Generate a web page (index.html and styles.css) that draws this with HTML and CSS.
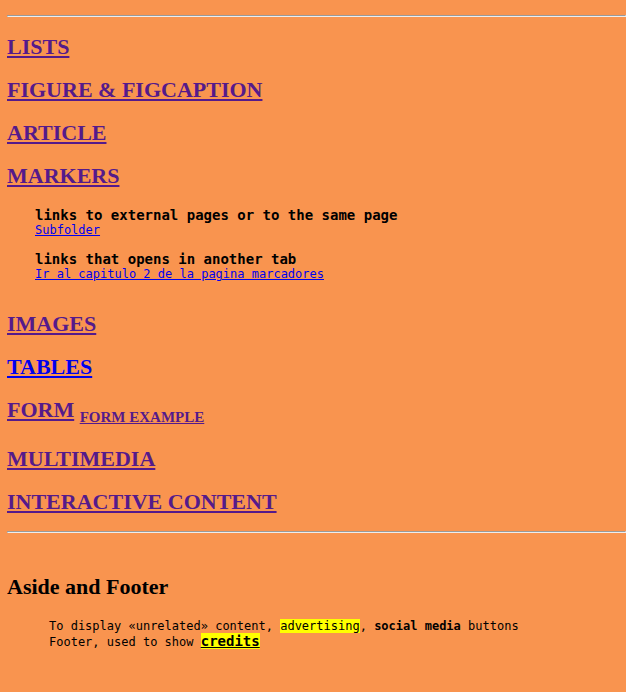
FILE: index.html
```html
<!DOCTYPE html>
<html lang="en">
<head>
<meta charset="utf-8">
<title>HTML index</title>
<link rel="stylesheet" href="styles.css">
</head>
<body>
<hr>
<nav>
<h2><a class="visited" href="#lists">LISTS</a></h2>
<h2><a class="visited" href="#figure">FIGURE &amp; FIGCAPTION</a></h2>
<h2><a class="visited" href="#article">ARTICLE</a></h2>
<h2><a class="visited" href="#markers">MARKERS</a></h2>
<dl class="links">
<dt>links to external pages or to the same page</dt>
<dd><a href="#subfolder">Subfolder</a></dd>
<dt>links that opens in another tab</dt>
<dd><a href="#capitulo2" target="_blank" lang="es">Ir al capitulo 2 de la pagina marcadores</a></dd>
</dl>
<h2><a class="visited" href="#images">IMAGES</a></h2>
<h2><a href="#tables">TABLES</a></h2>
<h2><a class="visited" href="#form">FORM</a> <sub><a class="visited" href="#form-example">FORM EXAMPLE</a></sub></h2>
<h2><a class="visited" href="#multimedia">MULTIMEDIA</a></h2>
<h2><a class="visited" href="#interactive">INTERACTIVE CONTENT</a></h2>
</nav>
<hr>
<footer>
<h2>Aside and Footer</h2>
<p>To display «unrelated» content, <mark>advertising</mark>, <strong>social media</strong> buttons<br>
Footer, used to show <mark class="credits">credits</mark></p>
</footer>
</body>
</html>
```
FILE: styles.css
```css
body {
  margin: 15px 0 0 7px;
  background: #f9944f;
  color: #000;
  font-family: "Liberation Serif", serif;
  font-size: 16px;
}

hr {
  margin: 0;
}

h2 {
  margin: 16px 0;
  font-size: 22px;
  line-height: 27px;
}

a {
  color: #0000ee;
}

a.visited {
  color: #551a8b;
}

sub {
  font-size: 15px;
  line-height: 24px;
}

.links {
  margin: 18px 28px 29px;
  font-family: "DejaVu Sans Mono", monospace;
  font-size: 12px;
  line-height: 14px;
}

.links dt {
  font-size: 14px;
  line-height: 16px;
  font-weight: bold;
}

.links dd {
  margin: 0 0 14px;
}

footer {
  padding-top: 24px;
}

footer p {
  margin: 18px 42px;
  font-family: "DejaVu Sans Mono", monospace;
  font-size: 12px;
  line-height: 16px;
}

mark {
  background: #ff0;
}

.credits {
  font-size: 14px;
  line-height: 14px;
  font-weight: bold;
  text-decoration: underline;
}
```
